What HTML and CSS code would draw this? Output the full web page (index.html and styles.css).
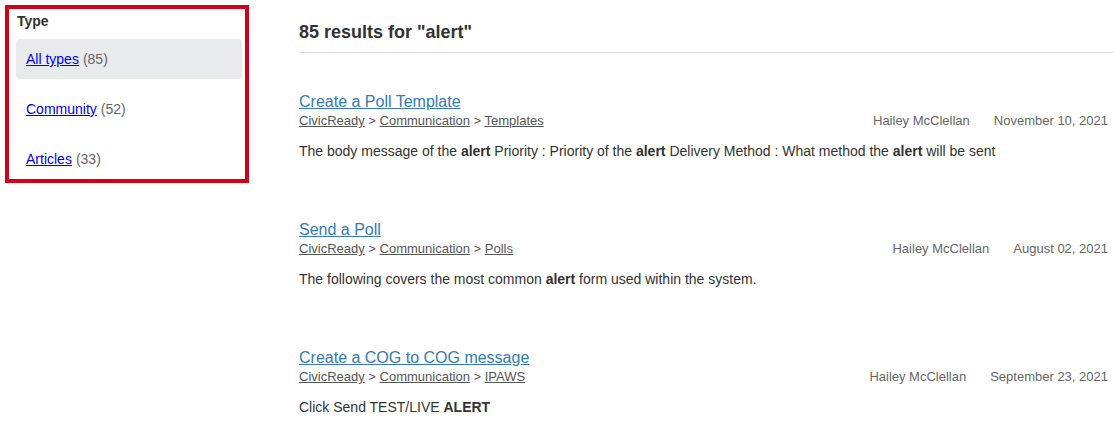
FILE: index.html
```html
<!DOCTYPE html>
<html lang="en">
<head>
<meta charset="UTF-8">
<meta name="viewport" content="width=device-width, initial-scale=1.0">
<title>Search results</title>
<link rel="stylesheet" href="styles.css">
</head>
<body>
<div class="page">
  <aside class="filters">
    <div class="filter-title">Type</div>
    <ul class="filter-list">
      <li class="filter-item active"><a href="#">All types</a> <span class="count">(85)</span></li>
      <li class="filter-item"><a href="#">Community</a> <span class="count">(52)</span></li>
      <li class="filter-item"><a href="#">Articles</a> <span class="count">(33)</span></li>
    </ul>
  </aside>

  <main class="results">
    <h1>85 results for "alert"</h1>

    <div class="result">
      <a class="result-title" href="#">Create a Poll Template</a>
      <div class="result-meta">
        <div class="crumbs"><a href="#">CivicReady</a> &gt; <a href="#">Communication</a> &gt; <a href="#">Templates</a></div>
        <div class="info"><span>Hailey McClellan</span><span>November 10, 2021</span></div>
      </div>
      <p class="result-text">The body message of the <b>alert</b> Priority : Priority of the <b>alert</b> Delivery Method : What method the <b>alert</b> will be sent</p>
    </div>

    <div class="result">
      <a class="result-title" href="#">Send a Poll</a>
      <div class="result-meta">
        <div class="crumbs"><a href="#">CivicReady</a> &gt; <a href="#">Communication</a> &gt; <a href="#">Polls</a></div>
        <div class="info"><span>Hailey McClellan</span><span>August 02, 2021</span></div>
      </div>
      <p class="result-text">The following covers the most common <b>alert</b> form used within the system.</p>
    </div>

    <div class="result">
      <a class="result-title" href="#">Create a COG to COG message</a>
      <div class="result-meta">
        <div class="crumbs"><a href="#">CivicReady</a> &gt; <a href="#">Communication</a> &gt; <a href="#">IPAWS</a></div>
        <div class="info"><span>Hailey McClellan</span><span>September 23, 2021</span></div>
      </div>
      <p class="result-text">Click Send TEST/LIVE <b>ALERT</b></p>
    </div>
  </main>
</div>
</body>
</html>
```

FILE: styles.css
```css
body {
  margin: 0;
  font-family: "Liberation Sans", Arial, sans-serif;
  color: #333;
  background: #fff;
}

.page {
  display: flex;
  align-items: flex-start;
}

/* Sidebar filter */
.filters {
  width: 244px;
  margin: 5px 0 0 5px;
  padding: 2px 3px 0 7px;
  box-sizing: border-box;
  border: 4px solid #d0021b;
}

.filter-title {
  font-size: 14px;
  font-weight: bold;
  line-height: 20px;
  padding-left: 1px;
  margin-bottom: 8px;
}

.filter-list {
  list-style: none;
  margin: 0;
  padding: 0;
  display: flex;
  flex-direction: column;
  gap: 10px;
}

.filter-item {
  height: 40px;
  display: flex;
  align-items: center;
  gap: 4px;
  padding-left: 10px;
  font-size: 14px;
  border-radius: 4px;
}

.filter-item.active {
  background: #e9eaec;
}

.filter-item a {
  color: #0000ee;
}

.count {
  color: #666;
}

/* Results */
.results {
  flex: 1;
  margin-left: 50px;
  padding-top: 20px;
}

.results h1 {
  margin: 0;
  font-size: 18px;
  line-height: 24px;
  padding-bottom: 8px;
  border-bottom: 1px solid #ddd;
}

.result {
  margin-top: 39px;
}

.result + .result {
  margin-top: 59px;
}

.result-title {
  display: block;
  font-size: 16px;
  line-height: 20px;
  color: #337ab7;
}

.result-meta {
  display: flex;
  justify-content: space-between;
  font-size: 13px;
  line-height: 18px;
  color: #555;
  padding-right: 6px;
}

.crumbs a {
  color: #555;
}

.info {
  display: flex;
  gap: 24px;
  color: #666;
}

.result-text {
  margin: 11px 0 0;
  font-size: 14px;
  line-height: 20px;
}
```
